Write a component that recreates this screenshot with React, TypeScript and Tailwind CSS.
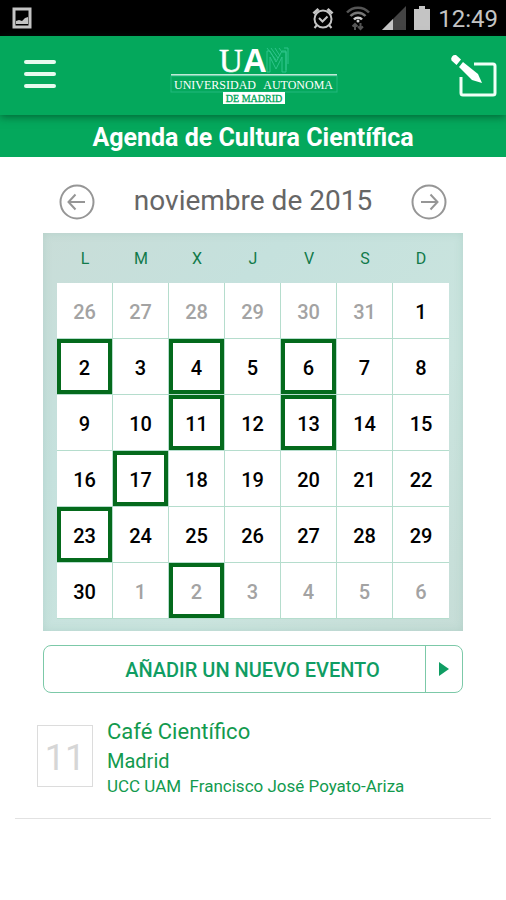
import { clsx } from 'clsx';

const WEEKDAYS = ['L', 'M', 'X', 'J', 'V', 'S', 'D'];

type Day = { day: number; outside?: boolean; event?: boolean };

const EVENT_INDEXES = [7, 9, 11, 16, 18, 22, 28, 37];

// November 2015 starts on a Sunday, so the grid opens with the last 6 days of October
const days: Day[] = Array.from({ length: 42 }, (_, i) => {
  const event = EVENT_INDEXES.includes(i);
  if (i < 6) return { day: 26 + i, outside: true, event };
  if (i > 35) return { day: i - 35, outside: true, event };
  return { day: i - 5, event };
});

const weeks = Array.from({ length: 6 }, (_, i) => days.slice(i * 7, i * 7 + 7));

function StatusBar() {
  return (
    <div className="flex h-9 items-center justify-between bg-black pl-3 pr-2 text-[#c4c4c4]">
      <svg width="20" height="22" viewBox="0 0 20 22" fill="none">
        <rect x="2" y="2" width="16" height="18" stroke="currentColor" strokeWidth="3" />
        <path d="M4 17v-3l3-1 3 1 3-3 3-1v7z" fill="currentColor" />
      </svg>
      <div className="flex items-center">
        <svg width="22" height="24" viewBox="0 0 22 24" fill="none" stroke="currentColor" strokeWidth="2">
          <circle cx="11" cy="13" r="8.5" />
          <path d="M7 12l3.5 3.5 5-5" />
          <path d="M1.5 7.500l5-4.500M20.500 7.500l-5-4.500" strokeWidth="3" />
          <path d="M5 19l-2.500 3M17 19l2.500 3" />
        </svg>
        <svg className="ml-3" width="24" height="26" viewBox="0 0 24 26" fill="none" strokeWidth="2.500">
          <path d="M1 7.500c6-6.500 16-6.500 22 0" stroke="#555" />
          <path d="M4.500 11c4-4.500 11-4.500 15 0" stroke="#777" />
          <path d="M8 14.500c2-2.500 6-2.500 8 0" stroke="#ccc" />
          <circle cx="12" cy="16" r="1.500" fill="#ccc" />
          <path d="M9 25v-6m-2.500 2.500L9 19l2.500 2.500M14.500 18v6m-2.500-2.500l2.500 2.500 2.500-2.500" stroke="#555" strokeWidth="2" />
        </svg>
        <svg className="ml-3" width="24" height="24" viewBox="0 0 24 24">
          <path d="M0 24L24 0v24z" fill="#444" />
          <path d="M0 24L11 13v11z" fill="currentColor" />
        </svg>
        <svg className="ml-2" width="16" height="24" viewBox="0 0 16 24" fill="currentColor">
          <path d="M5 0h6v3h5v21H0V3h5z" />
        </svg>
        <span className="ml-2 pt-0.5 text-2xl leading-8">12:49</span>
      </div>
    </div>
  );
}

function Logo() {
  return (
    <svg width="170" height="72" viewBox="0 -6 170 72" role="img" aria-label="Universidad Autonoma de Madrid">
      <text x="51" y="26" fontFamily="Liberation Serif, serif" fontSize="33" fill="#fff" stroke="#fff" strokeWidth="0.500">
        U
      </text>
      <text x="75" y="26" fontFamily="Liberation Sans, sans-serif" fontSize="33" fontWeight="700" fill="#fff">
        A
      </text>
      <g fill="none" stroke="#2fc48b" strokeWidth="1">
        <path d="M99 5v21h3V11l6 12 6-12v15h4V5h-4l-6 11-6-11z" />
        <path d="M99 2l9 12M103 2l7 10M107 2l5 8M111 2l3 4h4v18M116 2h4v16" />
      </g>
      <path d="M3 29h166" stroke="#fff" strokeWidth="1.500" />
      <rect x="3" y="30" width="166" height="16" fill="none" stroke="#21b87c" />
      <text x="6" y="43" fontFamily="Liberation Serif, serif" fontSize="12" fill="#fff">
        UNIVERSIDAD
      </text>
      <text x="165" y="43" textAnchor="end" fontFamily="Liberation Serif, serif" fontSize="12" fill="#fff">
        AUTONOMA
      </text>
      <rect x="55" y="46" width="62" height="12" fill="#fff" />
      <text x="86" y="56" textAnchor="middle" fontFamily="Liberation Serif, serif" fontSize="10" fill="#00a65a" stroke="#00a65a" strokeWidth="0.300">
        DE MADRID
      </text>
    </svg>
  );
}

function Header() {
  return (
    <header className="relative flex h-[79px] items-center justify-between bg-[#04a85c] pl-6 pr-2 shadow-[0_2px_8px_rgba(0,60,30,0.6)]">
      <button type="button" aria-label="Menú" className="mb-1 flex flex-col gap-2 rounded">
        <span className="h-1 w-8 rounded-full bg-[#e6fbef]" />
        <span className="h-1 w-8 rounded-full bg-[#e6fbef]" />
        <span className="h-1 w-8 rounded-full bg-[#e6fbef]" />
      </button>
      <Logo />
      <button type="button" aria-label="Nuevo evento">
        <svg width="48" height="44" viewBox="0 0 48 44" fill="none">
          <path d="M24 10h19a2 2 0 0 1 2 2v27a2 2 0 0 1-2 2H13a2 2 0 0 1-2-2V23" stroke="#f0fff7" strokeWidth="3" />
          <path d="M13 8l15 12 4 9-10-3L9 13z" fill="#fff" />
          <path d="M6 1l5 4.500-4.500 5.500-5-4.500A4 4 0 0 1 6 1z" fill="#fff" />
        </svg>
      </button>
    </header>
  );
}

function ArrowButton({ label, flip }: { label: string; flip?: boolean }) {
  return (
    <button type="button" aria-label={label}>
      <svg
        className={clsx(flip && '-scale-x-100')}
        width="36"
        height="36"
        viewBox="0 0 36 36"
        fill="none"
        stroke="#969696"
        strokeWidth="2"
      >
        <circle cx="18" cy="18" r="16.500" />
        <path d="M26 18H10M16.500 10.500L9.500 18l7 7.500" />
      </svg>
    </button>
  );
}

function Calendar() {
  return (
    <div className="bg-[linear-gradient(135deg,#c9ddd8_0%,#c5e1dd_30%,#cae4de_65%,#c6ddd7_100%)] px-[14px] pb-3 shadow-[inset_0_0_8px_rgba(120,170,155,0.25)]">
      <table className="w-full table-fixed border-separate border-spacing-0">
        <thead>
          <tr>
            {WEEKDAYS.map((d) => (
              <th key={d} scope="col" className="h-[50px] pt-0.5 text-base font-normal text-[#117a4a]">
                {d}
              </th>
            ))}
          </tr>
        </thead>
        <tbody>
          {weeks.map((week, w) => (
            <tr key={w}>
              {week.map(({ day, outside, event }, i) => (
                <td key={i} className="h-14 border-b border-r border-[#b5ddcd] bg-white p-0 last:border-r-0">
                  <button
                    type="button"
                    className={clsx(
                      'block h-[55px] w-full border-4 pt-0.5 text-xl font-medium',
                      event ? 'border-[#046a1c]' : 'border-transparent',
                      outside ? 'text-[#a3a3a3]' : 'text-black',
                    )}
                  >
                    {day}
                  </button>
                </td>
              ))}
            </tr>
          ))}
        </tbody>
      </table>
    </div>
  );
}

export default function App() {
  return (
    <div className="min-h-screen bg-white font-[Roboto,sans-serif]">
      <StatusBar />
      <Header />
      <h1 className="flex h-[42px] items-center justify-center bg-[#04a85c] pt-1 text-[25px] font-bold text-white">
        Agenda de Cultura Científica
      </h1>

      <main className="px-[15px]">
        <section className="px-7">
          <div className="flex h-[76px] items-center justify-between px-4 pt-[14px]">
            <ArrowButton label="Mes anterior" />
            <h2 className="pb-0.5 text-[28px] leading-10 text-[#666]">noviembre de 2015</h2>
            <ArrowButton label="Mes siguiente" flip />
          </div>

          <Calendar />

          <button
            type="button"
            className="mt-[14px] flex h-12 w-full items-stretch rounded-lg border border-[#7cc9a8] text-[#0f9d63]"
          >
            <span className="flex flex-1 items-center justify-center pl-9 pt-0.5 text-xl font-medium">
              AÑADIR UN NUEVO EVENTO
            </span>
            <span className="flex w-[37px] items-center justify-center border-l border-[#7cc9a8]">
              <svg width="10" height="14" viewBox="0 0 10 14" fill="currentColor">
                <path d="M0 0l10 7-10 7z" />
              </svg>
            </span>
          </button>
        </section>

        <article className="mt-6 flex gap-[14px] border-b border-[#e2e2e2] pb-[21px] pl-[22px]">
          <time
            dateTime="2015-11-11"
            className="mt-2 flex h-[62px] w-14 items-center justify-center border border-[#dcdcdc] pt-1 text-4xl text-[#d6d6d6]"
          >
            11
          </time>
          <div className="text-[#129a4e]">
            <h3 className="text-[22px] leading-[30px]">Café Científico</h3>
            <p className="text-xl leading-7">Madrid</p>
            <p className="whitespace-pre text-[17px] leading-[22px]">UCC UAM  Francisco José Poyato-Ariza</p>
          </div>
        </article>
      </main>
    </div>
  );
}
